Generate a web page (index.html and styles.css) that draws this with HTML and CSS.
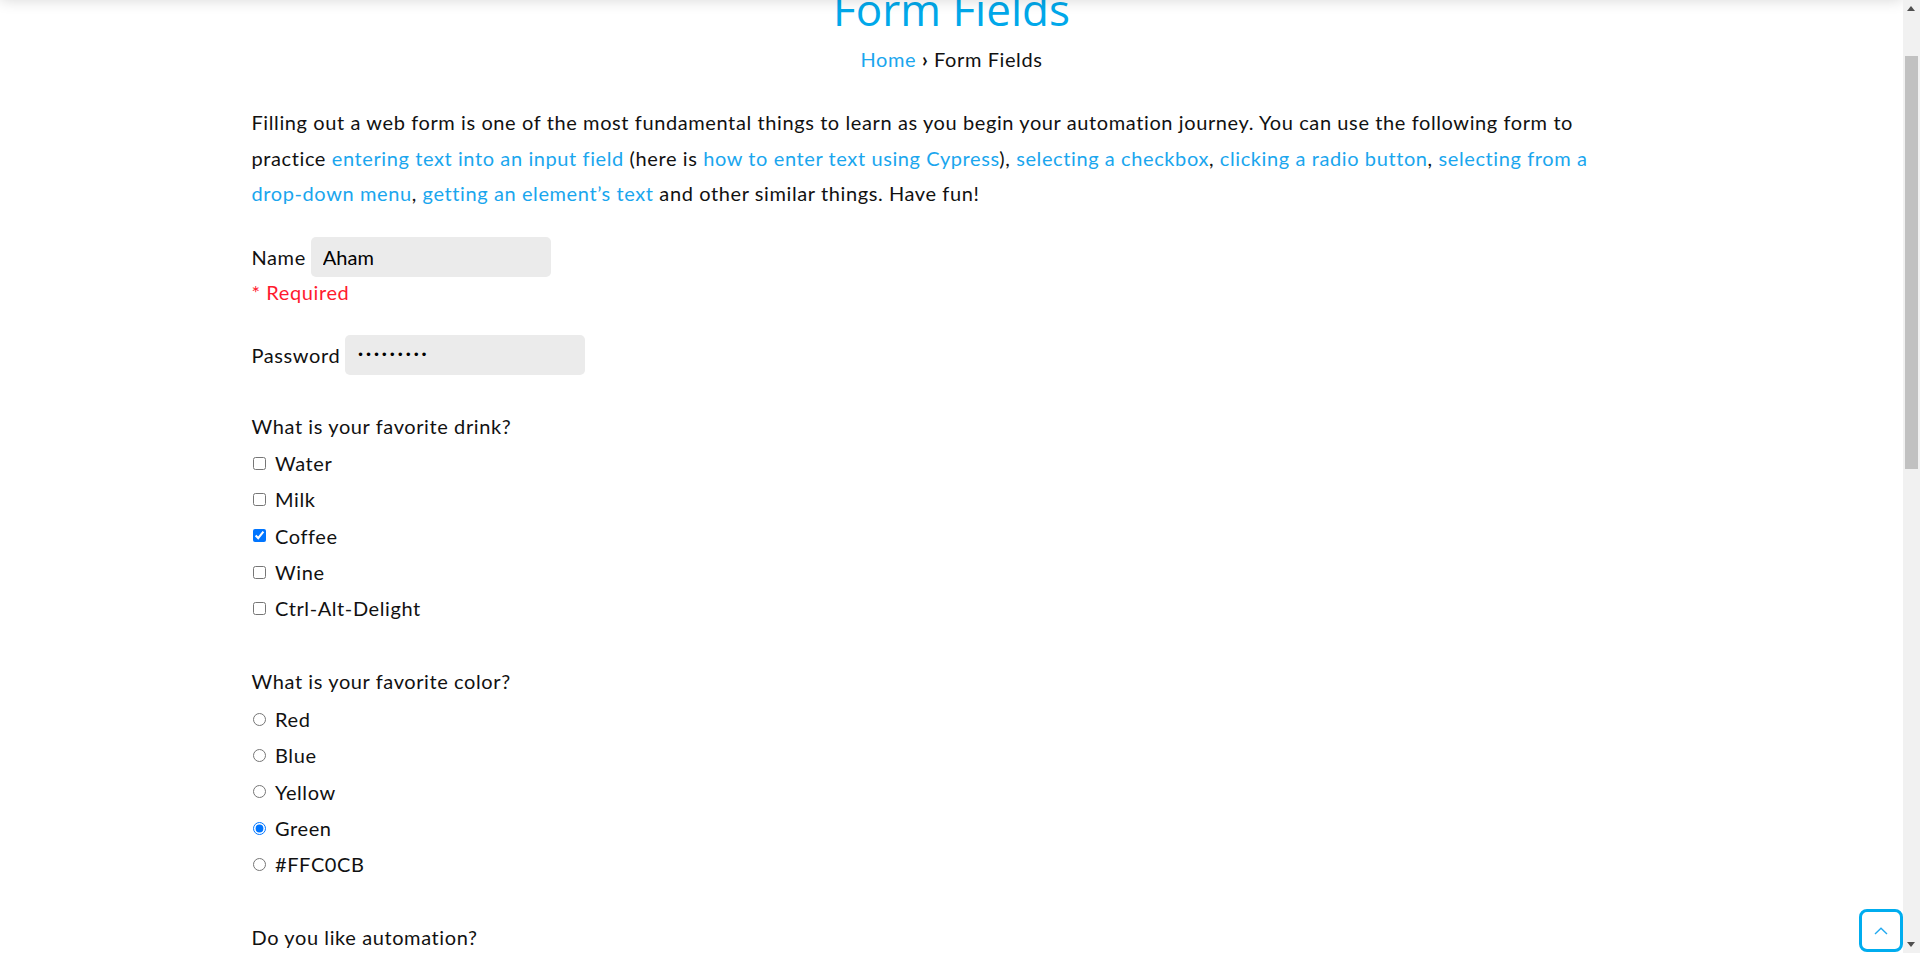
FILE: index.html
```html
<!DOCTYPE html>
<html lang="en">
<head>
<meta charset="utf-8">
<title>Form Fields</title>
<link rel="stylesheet" href="styles.css">
</head>
<body>
<header class="site-header"></header>
<main class="page">
  <div class="hero">
    <h1 class="title">Form Fields</h1>
    <nav class="crumbs"><a href="#">Home</a> <span class="sep">›</span> Form Fields</nav>
  </div>
  <p class="intro">Filling out a web form is one of the most fundamental things to learn as you begin your automation journey. You can use the following form to practice <a href="#">entering text into an input field</a> (here is <a href="#">how to enter text using Cypress</a>), <a href="#">selecting a checkbox</a>, <a href="#">clicking a radio button</a>, <a href="#">selecting from a <span class="nowrap">drop-down</span> menu</a>, <a href="#">getting an element’s text</a> and other similar things. Have fun!</p>
  <form class="form">
    <div class="field"><label for="name">Name</label><input id="name" type="text" value="Aham"></div>
    <div class="req">* Required</div>
    <div class="field field-pass"><label for="pw">Password</label><input id="pw" class="pw" type="password" value="123456789"></div>

    <div class="group">
      <div class="q">What is your favorite drink?</div>
      <label class="opt"><input type="checkbox">Water</label>
      <label class="opt"><input type="checkbox">Milk</label>
      <label class="opt"><input type="checkbox" checked>Coffee</label>
      <label class="opt"><input type="checkbox">Wine</label>
      <label class="opt"><input type="checkbox">Ctrl-Alt-Delight</label>
    </div>

    <div class="group group-2">
      <div class="q">What is your favorite color?</div>
      <label class="opt"><input type="radio" name="color">Red</label>
      <label class="opt"><input type="radio" name="color">Blue</label>
      <label class="opt"><input type="radio" name="color">Yellow</label>
      <label class="opt"><input type="radio" name="color" checked>Green</label>
      <label class="opt"><input type="radio" name="color">#FFC0CB</label>
    </div>

    <div class="group group-2">
      <div class="q">Do you like automation?</div>
      <select class="select"><option>Default</option><option>Yes</option><option>No</option><option>Undecided</option></select>
    </div>

    <div class="group group-2">
      <div class="q">Automation tools</div>
      <ul class="tools"><li>Selenium</li><li>Playwright</li><li>Cypress</li><li>Appium</li><li>Katalon Studio</li></ul>
    </div>

    <div class="field field-pass"><label for="email">Email</label><input id="email" type="text"></div>
    <div class="field-area"><label for="msg">Message</label><textarea id="msg"></textarea></div>
    <button class="submit" type="button">Submit</button>
  </form>
</main>
<footer class="footer">
  <p>© Practice Automation</p>
</footer>
<button class="to-top" type="button" aria-label="Scroll to top">
  <svg width="14" height="8" viewBox="0 0 14 8"><path d="M1 7 L7 1.2 L13 7" fill="none" stroke="#22aaf0" stroke-width="1.4"/></svg>
</button>
<div class="scrollbar" aria-hidden="true">
  <span class="sb-arrow sb-up"></span>
  <span class="sb-thumb"></span>
  <span class="sb-arrow sb-down"></span>
</div>
<script src="script.js"></script>
</body>
</html>
```

FILE: styles.css
```css
* { box-sizing: border-box; }
html, body { margin: 0; padding: 0; }
body {
  font-family: Lato, "Open Sans", sans-serif;
  font-size: 20px;
  letter-spacing: 0.6px;
  color: #111;
  background: #fff;
  padding-right: 17px;
}
.nowrap { white-space: nowrap; }
.site-header {
  position: fixed;
  top: -60px;
  left: 0;
  right: 17px;
  height: 60px;
  background: #fff;
  box-shadow: 0 0 14px rgba(0, 0, 0, 0.16);
  z-index: 10;
}
.page {
  max-width: 1400px;
  margin: 0 auto;
  padding-top: 73px;
}
.hero { text-align: center; }
.title {
  font-family: "Open Sans", sans-serif;
  font-weight: 400;
  font-size: 44px;
  letter-spacing: 0;
  line-height: 53px;
  margin: 0;
  color: #00a8ea;
}
.crumbs { margin-top: 11px; line-height: 24px; letter-spacing: 0.6px; }
.crumbs a, .intro a { color: #1aa6ee; text-decoration: none; }
.sep { font-weight: 700; }
.intro { margin: 34px 0 0; padding-right: 10px; line-height: 35.5px; }
.form { margin-top: 25px; }
.field { display: flex; align-items: center; height: 40px; gap: 5px; }
.field input {
  width: 240px;
  height: 40px;
  border: 0;
  border-radius: 5px;
  background: #ebebeb;
  font: inherit;
  color: #000;
  padding: 0 12px;
  outline: none;
}
.field input.pw {
  font-family: "Liberation Sans", sans-serif;
  font-size: 13px;
  letter-spacing: 3.4px;
  padding-left: 13px;
}
.req { color: #ff1a2e; line-height: 24px; margin-top: 3px; }
.field-pass { margin-top: 31px; }
.group { margin-top: 33px; }
.group-2 { margin-top: 37px; }
.q { line-height: 36px; margin-bottom: 1.5px; }
.opt { display: flex; align-items: center; height: 36.3px; }
.opt input { margin: 0 9px 0 1.5px; width: 13px; height: 13px; }
.select { font: inherit; font-size: 16px; padding: 6px 10px; margin-top: 6px; }
.tools { margin: 6px 0 0; padding-left: 24px; line-height: 34px; }
.field-area { display: flex; gap: 5px; margin-top: 30px; }
.field-area textarea { width: 400px; height: 140px; border: 0; border-radius: 5px; background: #ebebeb; }
.submit {
  margin-top: 30px;
  font: inherit;
  padding: 10px 28px;
  border: 0;
  border-radius: 5px;
  background: #1aa6ee;
  color: #fff;
}
.footer { margin-top: 120px; padding: 60px 0 170px; text-align: center; background: #f5f5f5; color: #555; font-size: 16px; }
.footer p { margin: 0; }
.to-top {
  position: fixed;
  right: 17px;
  bottom: 1px;
  width: 44px;
  height: 43px;
  border: 3px solid #00adef;
  border-radius: 8px;
  background: #fff;
  padding: 0;
  display: flex;
  align-items: center;
  justify-content: center;
  z-index: 20;
}
.scrollbar {
  position: fixed;
  top: 0;
  right: 0;
  bottom: 0;
  width: 17px;
  background: #f1f1f1;
  z-index: 30;
}
.sb-thumb {
  position: absolute;
  left: 2px;
  right: 2px;
  top: 56px;
  height: 413px;
  background: #c1c1c1;
}
.sb-arrow {
  position: absolute;
  left: 4px;
  width: 0;
  height: 0;
  border-left: 4.5px solid transparent;
  border-right: 4.5px solid transparent;
}
.sb-up { top: 6px; border-bottom: 5px solid #505050; }
.sb-down { bottom: 6px; border-top: 5px solid #505050; }
```

FILE: script.js
```js
window.scrollTo(0, 90);
window.addEventListener('load', function () { window.scrollTo(0, 90); });
```
